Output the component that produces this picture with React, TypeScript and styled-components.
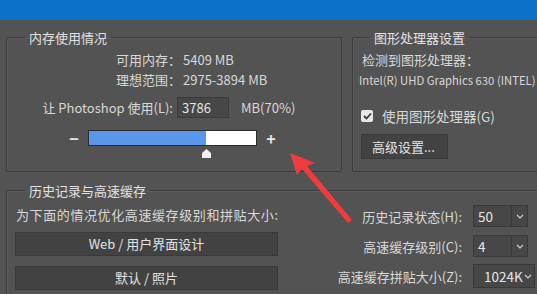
import styled, { createGlobalStyle } from 'styled-components'

const GlobalStyle = createGlobalStyle`
  html, body {
    margin: 0;
    padding: 0;
    background: #535353;
    overflow: hidden;
  }
  body {
    width: 537px;
    height: 294px;
    font-family: "Noto Sans CJK SC", "Noto Sans", sans-serif;
    font-size: 13px;
    color: #d8d8d8;
  }
`

const Page = styled.div`
  position: relative;
  width: 537px;
  height: 294px;
  overflow: hidden;
`

const TitleBar = styled.div`
  height: 20px;
  background: #0b72c8;
`

const TopRow = styled.div`
  display: flex;
  gap: 10px;
  margin: 10px 0 0 6px;
`

const Group = styled.fieldset<{ $width: number }>`
  box-sizing: border-box;
  width: ${({ $width }) => $width}px;
  flex: none;
  margin: 0;
  padding: 0;
  border: 1px solid #3d3d3d;
  border-radius: 2px;
  box-shadow: inset 1px 1px 0 #5c5c5c;
  min-width: 0;
`

const Legend = styled.legend<{ $offset: number }>`
  margin-left: ${({ $offset }) => $offset}px;
  padding: 0 4px;
  height: 15px;
  line-height: 15px;
  font-size: 13px;
  color: #e2e2e2;
`

const MemBody = styled.div`
  padding: 5px 0 0;
  height: 126px;
  box-sizing: border-box;
`

const InfoRow = styled.div`
  display: grid;
  grid-template-columns: 174px auto;
  column-gap: 2px;
  align-items: center;
  height: 20px;
  line-height: 20px;
`

const RightLabel = styled.span`
  text-align: right;
  white-space: nowrap;
`

const UseRow = styled.div`
  display: flex;
  align-items: center;
  margin-top: 7px;
  height: 21px;
`

const UseLabel = styled.span`
  width: 166px;
  text-align: right;
  white-space: nowrap;
`

const NumberBox = styled.div`
  box-sizing: border-box;
  width: 52px;
  height: 21px;
  margin-left: 4px;
  padding-left: 4px;
  line-height: 19px;
  background: #474747;
  border: 1px solid #3a3a3a;
  color: #e4e4e4;
`

const Unit = styled.span`
  margin-left: 12px;
`

const SliderRow = styled.div`
  display: flex;
  align-items: center;
  margin-top: 12px;
  height: 16px;
`

const Spacer = styled.span`
  width: 60px;
`

const Sign = styled.span`
  width: 14px;
  text-align: center;
  font-size: 16px;
  font-weight: bold;
  color: #e6e6e6;
  line-height: 16px;
`

const Track = styled.div`
  position: relative;
  box-sizing: border-box;
  width: 169px;
  height: 16px;
  margin: 0 7px;
  background: #ffffff;
  border: 1px solid #2c2c2c;
`

const Fill = styled.div`
  height: 100%;
  background: #5a97ea;
`

const Thumb = styled.svg`
  position: absolute;
  top: 18px;
  margin-left: -5px;
`

const GpuBody = styled.div`
  padding: 5px 0 0 8px;
  height: 126px;
  box-sizing: border-box;
`

const Line = styled.div<{ $small?: boolean }>`
  height: 20px;
  line-height: 20px;
  white-space: nowrap;
  font-size: ${({ $small }) => ($small ? '11.3px' : '13px')};
  margin-left: ${({ $small }) => ($small ? '-2px' : '1px')};
`

const CheckRow = styled.label`
  display: flex;
  align-items: center;
  gap: 9px;
  margin-top: 18px;
  height: 16px;
  font-size: 13.5px;
  white-space: nowrap;
`

const Box = styled.span`
  width: 12px;
  height: 12px;
  border-radius: 2px;
  background: #e8e8e8;
  display: flex;
  align-items: center;
  justify-content: center;
`

const Button = styled.div<{ $width: number }>`
  box-sizing: border-box;
  width: ${({ $width }) => $width}px;
  height: 25px;
  line-height: 23px;
  text-align: center;
  background: #424242;
  border: 1px solid #3a3a3a;
  color: #e2e2e2;
  white-space: nowrap;
`

const SmallButton = styled(Button)`
  margin-top: 10px;
  text-align: left;
  padding-left: 10px;
`

const HistoryGroup = styled(Group)`
  margin: 11px 0 0 6px;
`

const HistoryBody = styled.div`
  display: flex;
  padding: 0 0 0 8px;
  height: 120px;
`

const LeftCol = styled.div`
  width: 263px;
  display: flex;
  flex-direction: column;
`

const Hint = styled.div`
  margin-top: 7px;
  height: 20px;
  line-height: 20px;
  letter-spacing: 0.6px;
  white-space: nowrap;
  margin-left: 1px;
`

const BigButton = styled(Button)`
  height: 24px;
  line-height: 22px;
  margin-top: 7px;
  & + & {
    margin-top: 10px;
  }
`

const RightCol = styled.div`
  margin-left: 12px;
  padding-top: 7px;
  display: grid;
  grid-template-columns: 172px auto;
  grid-auto-rows: 22px;
  row-gap: 8px;
  column-gap: 11px;
  align-items: center;
`

const Select = styled.div<{ $wide?: boolean }>`
  box-sizing: border-box;
  display: flex;
  align-items: center;
  width: ${({ $wide }) => ($wide ? 62 : 55)}px;
  height: ${({ $wide }) => ($wide ? 24 : 22)}px;
  background: #474747;
  border: 1px solid #3a3a3a;
  color: #e6e6e6;
`

const SelectValue = styled.span<{ $wide?: boolean }>`
  flex: 1;
  padding-left: ${({ $wide }) => ($wide ? 10 : 4)}px;
  font-size: 13.5px;
`

const Drop = styled.span<{ $plain?: boolean }>`
  width: 15px;
  height: 100%;
  display: flex;
  align-items: center;
  justify-content: center;
  border-left: ${({ $plain }) => ($plain ? 'none' : '1px solid #3a3a3a')};
`

const Annotation = styled.svg`
  position: absolute;
  left: 0;
  top: 0;
  pointer-events: none;
`

function Chevron() {
  return (
    <svg width="8" height="5" viewBox="0 0 8 5">
      <path d="M1 1 L4 4 L7 1" fill="none" stroke="#cfcfcf" strokeWidth="1.2" />
    </svg>
  )
}

type SelProps = { value: string; wide?: boolean }

function DropSelect({ value, wide }: SelProps) {
  return (
    <Select $wide={wide}>
      <SelectValue $wide={wide}>{value}</SelectValue>
      <Drop $plain={wide}>
        <Chevron />
      </Drop>
    </Select>
  )
}

export default function App() {
  const percent = 70
  return (
    <Page>
      <GlobalStyle />
      <TitleBar />
      <TopRow>
        <Group $width={336}>
          <Legend $offset={18}>内存使用情况</Legend>
          <MemBody>
            <InfoRow>
              <RightLabel>可用内存：</RightLabel>
              <span>5409 MB</span>
            </InfoRow>
            <InfoRow>
              <RightLabel>理想范围：</RightLabel>
              <span>2975-3894 MB</span>
            </InfoRow>
            <UseRow>
              <UseLabel>让 Photoshop 使用(L):</UseLabel>
              <NumberBox>3786</NumberBox>
              <Unit>MB(70%)</Unit>
            </UseRow>
            <SliderRow>
              <Spacer />
              <Sign>−</Sign>
              <Track>
                <Fill style={{ width: `${percent}%` }} />
                <Thumb width="11" height="9" viewBox="0 0 11 9" style={{ left: `${percent}%` }}>
                  <path d="M5.5 0 L10 4 L10 9 L1 9 L1 4 Z" fill="#f2f2f2" />
                </Thumb>
              </Track>
              <Sign>+</Sign>
            </SliderRow>
          </MemBody>
        </Group>
        <Group $width={200}>
          <Legend $offset={17}>图形处理器设置</Legend>
          <GpuBody>
            <Line>检测到图形处理器：</Line>
            <Line $small>Intel(R) UHD Graphics 630 (INTEL)</Line>
            <CheckRow>
              <Box>
                <svg width="9" height="8" viewBox="0 0 9 8">
                  <path d="M1 4 L3.5 6.5 L8 1.5" fill="none" stroke="#3a3a3a" strokeWidth="1.8" />
                </svg>
              </Box>
              使用图形处理器(G)
            </CheckRow>
            <SmallButton $width={87}>高级设置...</SmallButton>
          </GpuBody>
        </Group>
      </TopRow>
      <HistoryGroup $width={560}>
        <Legend $offset={18}>历史记录与高速缓存</Legend>
        <HistoryBody>
          <LeftCol>
            <Hint>为下面的情况优化高速缓存级别和拼贴大小:</Hint>
            <BigButton $width={263}>Web / 用户界面设计</BigButton>
            <BigButton $width={263}>默认 / 照片</BigButton>
          </LeftCol>
          <RightCol>
            <RightLabel>历史记录状态(H):</RightLabel>
            <DropSelect value="50" />
            <RightLabel>高速缓存级别(C):</RightLabel>
            <DropSelect value="4" />
            <RightLabel>高速缓存拼贴大小(Z):</RightLabel>
            <DropSelect value="1024K" wide />
          </RightCol>
        </HistoryBody>
      </HistoryGroup>
      <Annotation width="537" height="294" viewBox="0 0 537 294">
        <path
          d="M290 153 L315 163 L307 166 L352 220 L348 223 L302 169 L297 175 Z"
          fill="#f03c3c"
        />
      </Annotation>
    </Page>
  )
}
